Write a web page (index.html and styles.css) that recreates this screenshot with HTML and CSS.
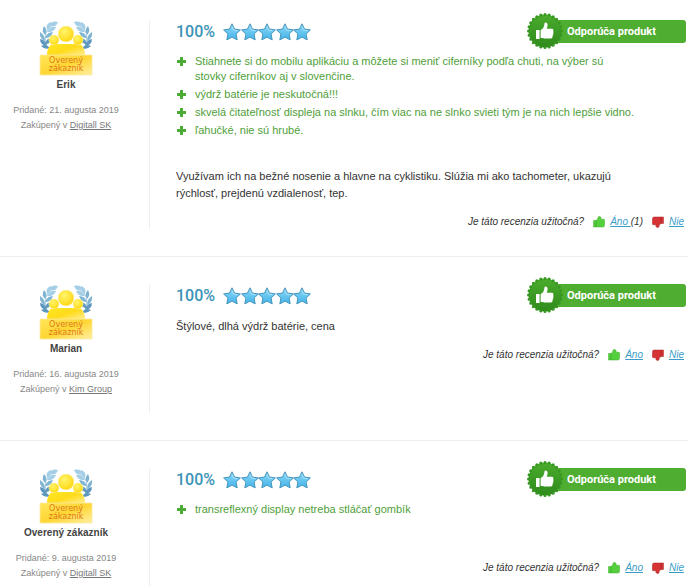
FILE: index.html
```html
<!DOCTYPE html>
<html lang="sk">
  <head>
    <meta charset="UTF-8" />
    <meta name="viewport" content="width=device-width, initial-scale=1.0" />
    <title>Recenzie</title>
    <link rel="stylesheet" href="styles.css">
  </head>
  <body>
    <svg class="sprite" width="0" height="0" aria-hidden="true">
      <defs>
        <linearGradient id="gold" x1="0" y1="0" x2="1" y2="1">
          <stop offset="0" stop-color="#ffe81f" />
          <stop offset="0.5" stop-color="#ffdb1c" />
          <stop offset="1" stop-color="#fff09a" />
        </linearGradient>
        <linearGradient id="plate" x1="0" y1="0" x2="1" y2="1">
          <stop offset="0" stop-color="#ffe65a" />
          <stop offset="0.5" stop-color="#ffd633" />
          <stop offset="1" stop-color="#fff0a0" />
        </linearGradient>
        <radialGradient id="head" cx="0.4" cy="0.35" r="0.7">
          <stop offset="0" stop-color="#fff56a" />
          <stop offset="1" stop-color="#ffd50c" />
        </radialGradient>
        <linearGradient id="blue" x1="0" y1="0" x2="0" y2="1">
          <stop offset="0" stop-color="#8fd8f8" />
          <stop offset="1" stop-color="#41b4ea" />
        </linearGradient>
        <linearGradient id="seal-green" x1="0" y1="0" x2="0" y2="1">
          <stop offset="0" stop-color="#4aac2c" />
          <stop offset="1" stop-color="#2f8a1c" />
        </linearGradient>
      </defs>
      <symbol id="laurel" viewBox="0 0 18 30">
        <path d="M16 1C7 5 2 14 8 28" fill="none" stroke="#a8cfe4" stroke-width="1" />
        <g fill="#a5cfe6">
          <path d="M18 1q-7-2-9 4q7 2 9-4z" />
          <path d="M11 1q-6 2-4 8q5-2 4-8z" />
          <path d="M16 6q-7-1-9 5q7 1 9-5z" />
        </g>
        <g fill="#7fb3d2">
          <path d="M4 5q-3 5 1 9q3-5-1-9z" />
          <path d="M13 11q-6 0-8 6q6 0 8-6z" />
          <path d="M0 11q-1 6 5 9q0-6-5-9z" />
        </g>
        <g fill="#5d97bd">
          <path d="M12 17q-6 0-7 6q6 0 7-6z" />
          <path d="M0 18q0 6 7 7q-1-6-7-7z" />
          <path d="M1 25q4 4 9 2q-4-5-9-2z" />
        </g>
      </symbol>
      <symbol id="verified" viewBox="0 0 54 56">
        <use href="#laurel" x="1" y="1" width="18" height="30" />
        <use href="#laurel" x="1" y="1" width="18" height="30" transform="matrix(-1 0 0 1 54 0)" />
        <path d="M8 36q0-12 8-12h22q8 0 8 12z" fill="url(#gold)" />
        <circle cx="15" cy="20" r="5" fill="url(#head)" stroke="#fff3b0" stroke-width="0.6" />
        <circle cx="39" cy="20" r="5" fill="url(#head)" stroke="#fff3b0" stroke-width="0.6" />
        <path d="M8 36q1-12 14-12h10q13 0 14 12z" fill="url(#gold)" />
        <circle cx="27" cy="14" r="8" fill="url(#head)" stroke="#fff3b0" stroke-width="0.8" />
        <path d="M1 35h52v20H1z" fill="url(#plate)" stroke="#fbe9a0" stroke-width="0.8" />
      </symbol>
      <symbol id="star" viewBox="0 0 18 18">
        <path d="M9 .8l2.500 5.300 5.900.8-4.300 4.100 1.100 5.900L9 14.100l-5.200 2.800 1.100-5.900L.6 6.900l5.900-.8z" fill="url(#blue)" stroke="#4796bd" stroke-width="1" stroke-linejoin="round" />
        <path d="M9 3.600l1.600 3.600 3.900.5" fill="none" stroke="#b9e8fb" stroke-width="0.8" />
      </symbol>
      <symbol id="stars" viewBox="0 0 90 18">
        <use href="#star" x="0" width="18" height="18" />
        <use href="#star" x="18" width="18" height="18" />
        <use href="#star" x="35" width="18" height="18" />
        <use href="#star" x="53" width="18" height="18" />
        <use href="#star" x="70" width="18" height="18" />
      </symbol>
      <symbol id="seal" viewBox="0 0 38 38">
        <circle cx="19" cy="19" r="16.500" fill="url(#seal-green)" />
        <circle cx="19" cy="19" r="16.500" fill="none" stroke="#389722" stroke-width="3" stroke-linecap="round" stroke-dasharray="0 1" pathLength="24" />
        <path d="M10 18h3.600v9H10zM14.600 18.200c2.400-1.200 3.600-3.400 3.900-6.700c.1-1.700 3-1.400 3.100 1.300c0 1.500-.4 2.700-.9 4h5.200c1.500 0 1.900 1.400 1.100 2.300c.8.7.8 1.800 0 2.400c.5.8.3 1.700-.5 2.200c.4 1.700-.4 2.800-1.800 2.800h-6.300c-1.500 0-2.500-.5-3.800-.7z" fill="#fff" />
      </symbol>
      <symbol id="plus" viewBox="0 0 9 9">
        <path d="M3 0h3v3h3v3H6v3H3V6H0V3h3z" fill="#4bab35" />
      </symbol>
      <symbol id="thumb" viewBox="0 0 12 12">
        <path d="M.5 4.500h2.500v6.500H.5zM3 4.500C4.800 3.600 4.800 2.500 5.100 1C5.500.2 8.200.2 8.200 2.200L8 3.300h2.700c1.100 0 1.200 1 .9 1.600c.4.600.4 1.200 0 1.700c.3.600.2 1.200-.1 1.600c.2 1.800-.4 2.800-1.400 2.800H3z" />
      </symbol>
    </svg>

    <main class="reviews">
      <article class="review">
        <aside class="author">
          <div class="verified">
            <svg aria-hidden="true"><use href="#verified" /></svg>
            <span>Overený zákazník</span>
          </div>
          <strong class="name">Erik</strong>
          <p class="meta">Pridané: 21. augusta 2019<br />Zakúpený v <a href="#">Digitall SK</a></p>
        </aside>
        <section class="content">
          <header class="rating">
            <span class="percent">100%</span>
            <svg class="stars" role="img" aria-label="5 z 5"><use href="#stars" /></svg>
            <span class="recommend"><svg class="seal"><use href="#seal" /></svg>Odporúča produkt</span>
          </header>
          <ul class="pros">
            <li><svg class="plus"><use href="#plus" /></svg><span>Stiahnete si do mobilu aplikáciu a môžete si meniť ciferníky podľa chuti, na výber sú<br />stovky ciferníkov aj v slovenčine.</span></li>
            <li><svg class="plus"><use href="#plus" /></svg><span>výdrž batérie je neskutočná!!!</span></li>
            <li><svg class="plus"><use href="#plus" /></svg><span>skvelá čitateľnosť displeja na slnku, čím viac na ne slnko svieti tým je na nich lepšie vidno.</span></li>
            <li><svg class="plus"><use href="#plus" /></svg><span>ľahučké, nie sú hrubé.</span></li>
          </ul>
          <p class="text">Využívam ich na bežné nosenie a hlavne na cyklistiku. Slúžia mi ako tachometer, ukazujú<br />rýchlosť, prejdenú vzdialenosť, tep.</p>
          <footer class="votes">
            <span>Je táto recenzia užitočná?</span>
            <span class="vote"><svg class="thumb up"><use href="#thumb" /></svg><span><a href="#">Áno </a>(1)</span></span>
            <span class="vote"><svg class="thumb down"><use href="#thumb" /></svg><a href="#">Nie</a></span>
          </footer>
        </section>
      </article>

      <article class="review">
        <aside class="author">
          <div class="verified">
            <svg aria-hidden="true"><use href="#verified" /></svg>
            <span>Overený zákazník</span>
          </div>
          <strong class="name">Marian</strong>
          <p class="meta">Pridané: 16. augusta 2019<br />Zakúpený v <a href="#">Kim Group</a></p>
        </aside>
        <section class="content">
          <header class="rating">
            <span class="percent">100%</span>
            <svg class="stars" role="img" aria-label="5 z 5"><use href="#stars" /></svg>
            <span class="recommend"><svg class="seal"><use href="#seal" /></svg>Odporúča produkt</span>
          </header>
          <p class="text">Štýlové, dlhá výdrž batérie, cena</p>
          <footer class="votes">
            <span>Je táto recenzia užitočná?</span>
            <span class="vote"><svg class="thumb up"><use href="#thumb" /></svg><a href="#">Áno</a></span>
            <span class="vote"><svg class="thumb down"><use href="#thumb" /></svg><a href="#">Nie</a></span>
          </footer>
        </section>
      </article>

      <article class="review">
        <aside class="author">
          <div class="verified">
            <svg aria-hidden="true"><use href="#verified" /></svg>
            <span>Overený zákazník</span>
          </div>
          <strong class="name">Overený zákazník</strong>
          <p class="meta">Pridané: 9. augusta 2019<br />Zakúpený v <a href="#">Digitall SK</a></p>
        </aside>
        <section class="content">
          <header class="rating">
            <span class="percent">100%</span>
            <svg class="stars" role="img" aria-label="5 z 5"><use href="#stars" /></svg>
            <span class="recommend"><svg class="seal"><use href="#seal" /></svg>Odporúča produkt</span>
          </header>
          <ul class="pros">
            <li><svg class="plus"><use href="#plus" /></svg><span>transreflexný display netreba stláčať gombík</span></li>
          </ul>
          <footer class="votes">
            <span>Je táto recenzia užitočná?</span>
            <span class="vote"><svg class="thumb up"><use href="#thumb" /></svg><a href="#">Áno</a></span>
            <span class="vote"><svg class="thumb down"><use href="#thumb" /></svg><a href="#">Nie</a></span>
          </footer>
        </section>
      </article>
    </main>
  </body>
</html>
```
FILE: styles.css
```css
* {
  box-sizing: border-box;
}
body {
  margin: 0;
  background: #fff;
  color: #333;
  font-family: "Liberation Sans", Arial, sans-serif;
  font-size: 11px;
}
p,
ul {
  margin: 0;
  padding: 0;
}
.sprite {
  position: absolute;
}
.reviews {
  padding: 0 12px 0 0;
}
.review {
  display: flex;
  padding: 27px 0;
  border-bottom: 1px solid #eee;
}
.review:first-child {
  padding-top: 20px;
}
.review:last-child {
  padding-bottom: 0;
  border-bottom: 0;
}
.author {
  display: flex;
  flex-direction: column;
  align-items: center;
  flex: 0 0 149px;
  padding: 0 17px 16px 0;
}
.review:last-child .author {
  padding-bottom: 5px;
}
.verified {
  position: relative;
  width: 54px;
  height: 56px;
  margin-bottom: 1px;
}
.verified svg {
  display: block;
  width: 100%;
  height: 100%;
}
/* caption printed on the gold plate */
.verified span {
  position: absolute;
  bottom: 3px;
  left: 0;
  width: 100%;
  color: #dd7a1c;
  font-family: "DejaVu Sans", sans-serif;
  font-size: 8px;
  line-height: 8px;
  text-align: center;
}
.name {
  margin-bottom: 10px;
  font-size: 10px;
  line-height: 16px;
  color: #444;
}
.meta {
  font-size: 9px;
  line-height: 15px;
  text-align: center;
  white-space: nowrap;
  color: #888;
}
.meta a {
  color: #777;
}
.content {
  flex: 1;
  min-width: 0;
  padding-left: 26px;
  border-left: 1px solid #eee;
}
.rating {
  display: flex;
  align-items: center;
  height: 23px;
  margin-bottom: 11px;
}
.percent {
  margin-right: 8px;
  font-family: Roboto, sans-serif;
  font-size: 16px;
  font-weight: 500;
  color: #3a93b8;
}
.stars {
  width: 90px;
  height: 18px;
}
.recommend {
  position: relative;
  width: 141px;
  height: 23px;
  margin: 0 2px 0 auto;
  padding-left: 22px;
  border-radius: 3px;
  background: #4fae31;
  color: #fff;
  font-family: Roboto, sans-serif;
  font-size: 11px;
  font-weight: 700;
  line-height: 23px;
}
/* seal hangs over the left end of the ribbon */
.seal {
  position: absolute;
  top: -8px;
  left: -19px;
  width: 38px;
  height: 38px;
}
.pros {
  margin-bottom: 30px;
  list-style: none;
  color: #4fa03a;
  line-height: 15px;
}
.pros li {
  display: flex;
  padding-right: 32px;
}
.pros li + li {
  margin-top: 3px;
}
.plus {
  flex: none;
  width: 9px;
  height: 9px;
  margin: 3px 9px 0 1px;
}
.text {
  padding-right: 32px;
  line-height: 17px;
}
.votes {
  display: flex;
  justify-content: flex-end;
  align-items: center;
  gap: 9px;
  margin-top: 13px;
  padding-right: 4px;
  font-size: 10px;
  font-style: italic;
  line-height: 14px;
}
.pros + .votes {
  margin-top: 44px;
}
.vote {
  display: flex;
  align-items: center;
  gap: 5px;
  white-space: pre;
}
.votes a {
  color: #3a9cc8;
}
.thumb {
  width: 12px;
  height: 12px;
}
.up {
  fill: #55cf3d;
  stroke: #3fae2c;
  stroke-width: 0.5;
}
.down {
  fill: #d63434;
  stroke: #a92727;
  stroke-width: 0.5;
  transform: rotate(180deg);
}
```
